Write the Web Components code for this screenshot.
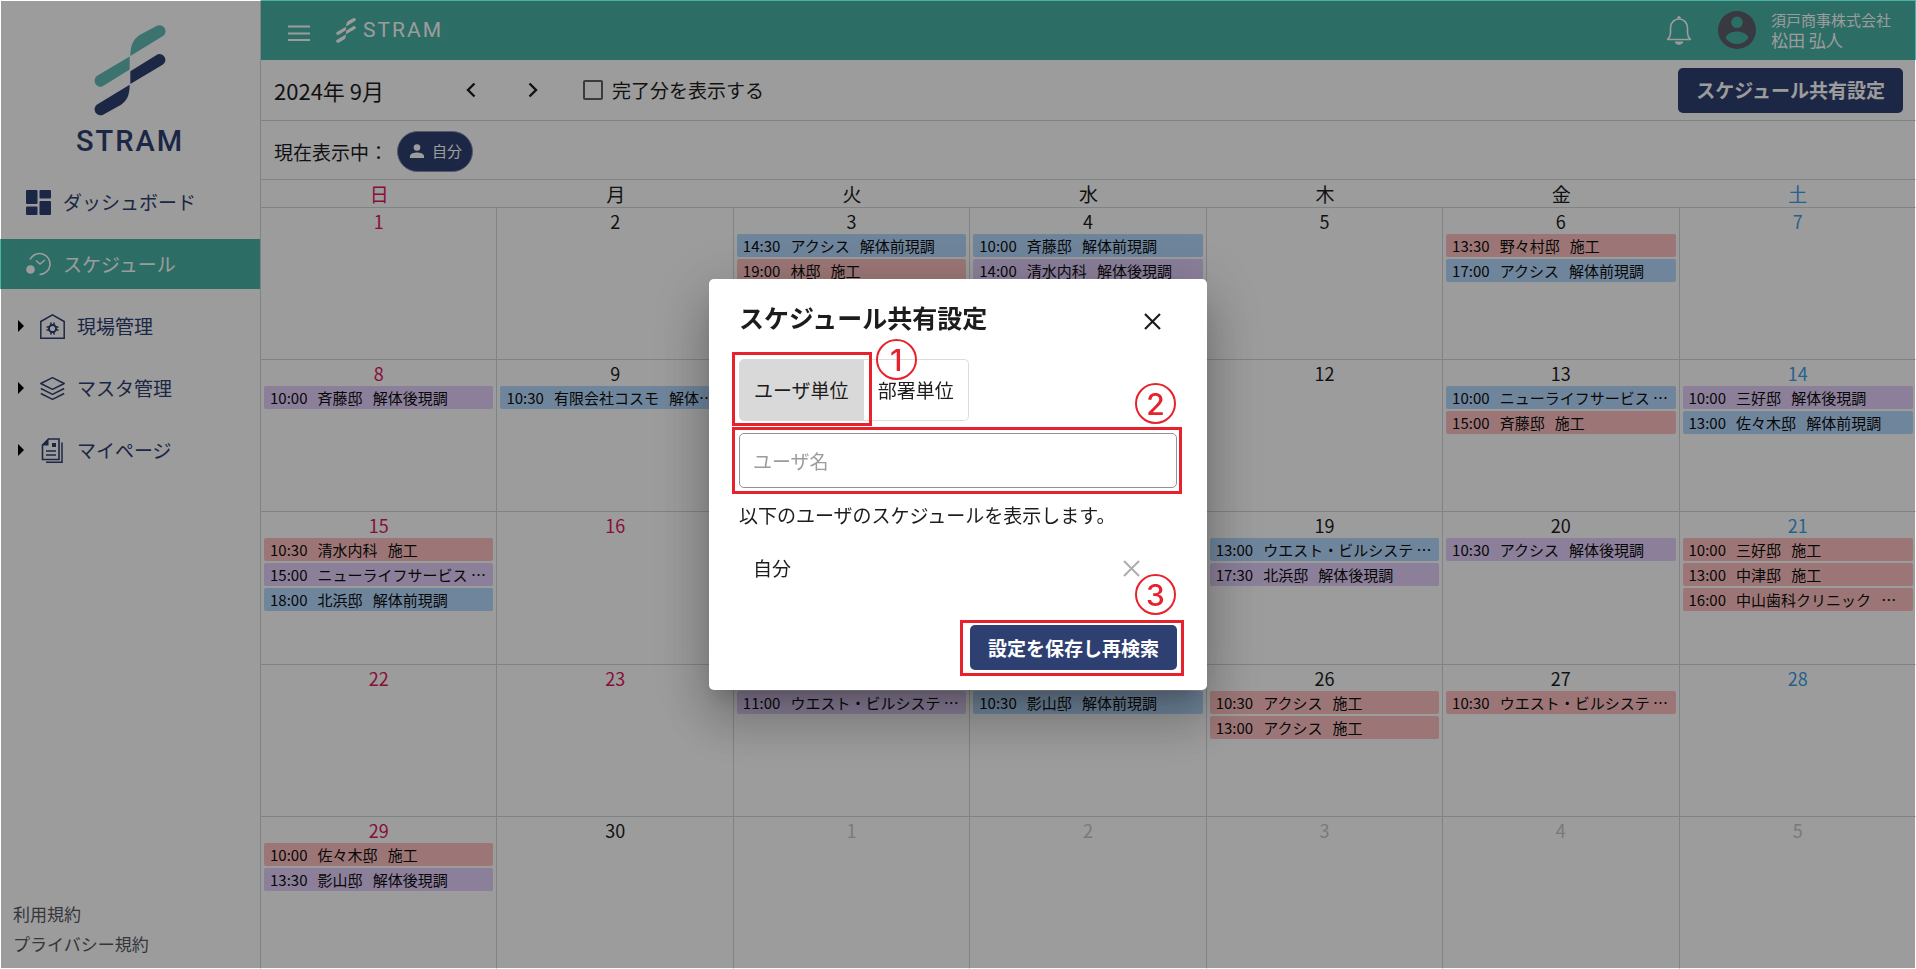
<!DOCTYPE html>
<html lang="ja">
<head>
<meta charset="utf-8">
<meta name="viewport" content="width=device-width, initial-scale=1">
<title>STRAM スケジュール</title>
<style>
  body {
    margin: 0;
    font-family: "Noto Sans CJK JP", "Noto Sans", sans-serif;
    font-size: 19px;
    color: #1c1c1c;
    background: #fff;
    --teal: #48b3a6;
    --navy: #2e4072;
    --line: #cfd6d6;
    --mark: #e8222d;
  }
</style>
</head>
<body>
<stram-app></stram-app>

<script>
const define = (name, html, setup) => {
  const template = document.createElement('template');
  template.innerHTML = html.trim();
  customElements.define(name, class extends HTMLElement {
    connectedCallback() {
      if (this.shadowRoot) return;
      const root = this.attachShadow({ mode: 'open' });
      root.append(template.content.cloneNode(true));
      if (setup) setup(root, this);
    }
  });
};

const base = '*{box-sizing:border-box}button,input{font:inherit;color:inherit}button{cursor:pointer}svg{display:block;flex:none}a{color:inherit;text-decoration:none}';

/* Brand mark: two interlaced strokes; takes its two colours from properties */
define('stram-mark', `
<style>${base}:host{display:block}svg{width:100%;height:100%}</style>
<svg viewBox="284 74 216 274" aria-hidden="true">
  <g fill="var(--mark-top)">
    <path d="M393 167C393 130 405 112 428 100L472 77A17 17 0 0 1 490 108Z"/>
    <path d="M391 169V208L311 258A18 18 0 0 1 293 227Z"/>
  </g>
  <g fill="var(--mark-bottom)">
    <path d="M393 213L472 164A17 17 0 0 1 490 194L393 252Z"/>
    <path d="M391 254C391 290 380 306 357 319L311 344A18 18 0 0 1 293 313Z"/>
  </g>
</svg>`);

const icons = {
  dashboard: '<g fill="currentColor"><rect x="0" y="0" width="11.5" height="14" rx="1"/><rect x="13.5" y="0" width="11.5" height="8.5" rx="1"/><rect x="0" y="16.5" width="11.5" height="8.5" rx="1"/><rect x="13.5" y="11" width="11.5" height="14" rx="1"/></g>',
  schedule: '<path d="M4 7.500A10.500 10.500 0 1 1 13.500 22.500M10 8.500l4 3.500 5-4" fill="none" stroke="currentColor" stroke-width="1.600"/><circle cx="4.500" cy="17.500" r="4.300" fill="currentColor"/>',
  site: '<path d="M.8 7.500L12.500 .9 24.200 7.500V24.200H.8Z" fill="none" stroke="currentColor" stroke-width="1.500"/><circle cx="12.500" cy="14.500" r="3.600" fill="none" stroke="currentColor" stroke-width="2"/><path d="M11 8.500v3M14 8.500v3M11 17.500v3M14 17.500v3M6.500 13h3M6.500 16h3M15.500 13h3M15.500 16h3" stroke="currentColor" stroke-width="1.600"/>',
  master: '<path d="M.8 7.500L12.500 1.700 24.200 7.500 12.500 13.300ZM.8 12.500L12.500 18.300 24.200 12.500M.8 17.500L12.500 23.300 24.200 17.500" fill="none" stroke="currentColor" stroke-width="1.500" stroke-linejoin="round"/>',
  page: '<path d="M8.500 1H19V21.500H2.500V7Z" fill="none" stroke="currentColor" stroke-width="1.600"/><path d="M2 7.500L8.500 .8V7.500ZM12 5h4v4h-4Z" fill="currentColor"/><path d="M6 13h10M6 17h10M22 4.500V24.200H6" fill="none" stroke="currentColor" stroke-width="1.500"/>'
};

define('nav-item', `
<style>${base}
:host{display:block;color:var(--navy)}
a{display:flex;align-items:center;height:50px;padding-left:26px;gap:12px;line-height:28px}
svg{width:25px;height:25px}
.arrow{display:none;width:6px;height:12px;color:#000}
:host([group]) a{padding-left:18px;gap:0}
:host([group]) .arrow{display:block;margin-right:16px}
:host([group]) .icon{margin-right:12px}
:host([active]){background:var(--teal);color:#fff}
</style>
<a href="#"><svg class="arrow" viewBox="0 0 6 12" aria-hidden="true"><path d="M0 0L6 6 0 12Z"/></svg><svg class="icon" viewBox="0 0 25 25" aria-hidden="true"></svg><slot></slot></a>`,
(root, host) => {
  root.querySelector('.icon').innerHTML = icons[host.getAttribute('icon')];
  if (host.hasAttribute('active')) root.querySelector('a').setAttribute('aria-current', 'page');
});

define('side-nav', `
<style>${base}
:host{display:flex;flex-direction:column;width:261px;border-right:1px solid var(--line);background:#fff}
.brand{display:flex;flex-direction:column;align-items:center;padding-top:25px;color:var(--navy)}
stram-mark{width:72px;height:91px;--mark-top:#62bdb5;--mark-bottom:var(--navy)}
.word{margin-top:9px;font:500 29px/32px Roboto,sans-serif;letter-spacing:2px}
nav{display:flex;flex-direction:column;gap:12px;margin-top:20px}
footer{display:flex;flex-direction:column;margin-top:auto;padding:0 13px 10px;font-size:17px;line-height:30px;color:#55595f}
</style>
<div class="brand"><stram-mark></stram-mark><span class="word">STRAM</span></div>
<nav>
  <nav-item icon="dashboard">ダッシュボード</nav-item>
  <nav-item icon="schedule" active>スケジュール</nav-item>
  <nav-item icon="site" group>現場管理</nav-item>
  <nav-item icon="master" group>マスタ管理</nav-item>
  <nav-item icon="page" group>マイページ</nav-item>
</nav>
<footer><a href="#">利用規約</a><a href="#">プライバシー規約</a></footer>`);

define('app-header', `
<style>${base}
:host{display:flex;align-items:center;height:60px;padding:0 25px 0 26px;background:var(--teal);color:#fff}
button{display:block;padding:0;border:0;background:none}
.menu{margin-top:6px}
stram-mark{width:20px;height:25px;margin-left:25px;--mark-top:#fff;--mark-bottom:#fff}
.word{margin-left:7px;font:400 21px/24px Roboto,sans-serif;letter-spacing:2px}
.bell{margin-left:auto}
.avatar{margin-left:26px}
.user{display:grid;margin-left:15px;font-size:17px;line-height:20px}
.user small{font-size:15px}
</style>
<button class="menu" aria-label="メニュー"><svg width="24" height="16" viewBox="0 0 24 16"><path d="M1 1.500H23M1 8.500H23M1 15H23" stroke="currentColor" stroke-width="1.800"/></svg></button>
<stram-mark></stram-mark><span class="word">STRAM</span>
<button class="bell" aria-label="通知"><svg width="26" height="30" viewBox="0 0 26 30"><path d="M1.500 24.500H24.500C22.500 22.500 21.500 21 21.500 18V13C21.500 8 18 4 13 4S4.500 8 4.500 13V18C4.500 21 3.500 22.500 1.500 24.500Z" fill="none" stroke="currentColor" stroke-width="1.600" stroke-linejoin="round"/><path d="M11.500 3.500a1.500 2 0 0 1 3 0M9 27h8c-1 3-7 3-8 0Z" fill="currentColor" stroke="currentColor"/></svg></button>
<svg class="avatar" width="38" height="38" viewBox="0 0 38 38" aria-hidden="true"><path fill="#5d5d6b" fill-rule="evenodd" d="M19 0a19 19 0 1 0 0 38 19 19 0 0 0 0-38ZM19 5.500a5.800 5.800 0 1 1 0 11.600 5.800 5.800 0 0 1 0-11.600ZM19 33c-5 0-9.200-2.500-11.500-6.500 1.500-4 7.500-6 11.500-6s10 2 11.500 6C28.200 30.500 24 33 19 33Z"/></svg>
<div class="user"><small>須戸商事株式会社</small><span>松田 弘人</span></div>`);

define('primary-button', `
<style>${base}
:host{display:block}
button{display:block;height:45px;padding:0 18px;border:0;border-radius:5px;background:var(--navy);color:#fff;font-weight:700;line-height:28px}
</style>
<button type="button"><slot></slot></button>`);

define('calendar-toolbar', `
<style>${base}
:host{display:block}
.row{display:flex;align-items:center;padding:0 13px;border-bottom:1px solid var(--line)}
.month{height:61px}
.filter{height:59px;padding-top:2px}
h1{width:183px;margin:0;font-size:22px;font-weight:400;line-height:32px}
button{display:flex;align-items:center;justify-content:center;width:28px;height:28px;padding:0;border:0;background:none}
.next{margin-left:34px}
label{display:flex;align-items:center;gap:9px;margin-left:36px;line-height:28px}
input{appearance:none;width:20px;height:20px;margin:0;border:2px solid #5f5f5f;border-radius:2px}
primary-button{margin-left:auto}
.chip{display:flex;align-items:center;gap:8px;height:41px;margin-left:9px;padding:0 10px 0 12px;border:1px solid #8793b5;border-radius:21px;background:var(--navy);color:#fff;font-size:15px;line-height:22px}
</style>
<div class="row month">
  <h1>2024年 9月</h1>
  <button aria-label="前の月"><svg width="10" height="16" viewBox="0 0 10 16"><path d="M8.500 1.500L2 8l6.500 6.500" fill="none" stroke="currentColor" stroke-width="2.400"/></svg></button>
  <button class="next" aria-label="次の月"><svg width="10" height="16" viewBox="0 0 10 16"><path d="M1.500 1.500L8 8l-6.500 6.500" fill="none" stroke="currentColor" stroke-width="2.400"/></svg></button>
  <label><input type="checkbox">完了分を表示する</label>
  <primary-button>スケジュール共有設定</primary-button>
</div>
<div class="row filter">
  <span>現在表示中：</span>
  <span class="chip"><svg width="14" height="14" viewBox="0 0 14 14" aria-hidden="true"><circle cx="7" cy="3.500" r="3.300" fill="currentColor"/><path d="M0 14v-2C0 9.500 4.500 8.500 7 8.500s7 1 7 3.500v2Z" fill="currentColor"/></svg>自分</span>
</div>`);

/* kind: work = 施工, before = 解体前現調, after = 解体後現調 */
define('calendar-event', `
<style>${base}
:host{display:block;height:23px;padding:0 6px;border-radius:2px;white-space:nowrap;font-size:15px;line-height:23px;color:#0c0c0c;background:#b6daff}
:host([kind=work]){background:#ffc2c2}
:host([kind=after]){background:#e3d0fb}
</style><slot></slot>`);

const B = 'before', A = 'after', W = 'work';
const S = '\u00a0\u00a0\u00a0';
const events = {
  3: [[B, '14:30', 'アクシス', '解体前現調'], [W, '19:00', '林邸', '施工']],
  4: [[B, '10:00', '斉藤邸', '解体前現調'], [A, '14:00', '清水内科', '解体後現調']],
  6: [[W, '13:30', '野々村邸', '施工'], [B, '17:00', 'アクシス', '解体前現調']],
  8: [[A, '10:00', '斉藤邸', '解体後現調']],
  9: [[B, '10:30', '有限会社コスモ', '解体…']],
  13: [[B, '10:00', 'ニューライフサービス …'], [W, '15:00', '斉藤邸', '施工']],
  14: [[A, '10:00', '三好邸', '解体後現調'], [B, '13:00', '佐々木邸', '解体前現調']],
  15: [[W, '10:30', '清水内科', '施工'], [A, '15:00', 'ニューライフサービス …'], [B, '18:00', '北浜邸', '解体前現調']],
  19: [[B, '13:00', 'ウエスト・ビルシステ …'], [A, '17:30', '北浜邸', '解体後現調']],
  20: [[A, '10:30', 'アクシス', '解体後現調']],
  21: [[W, '10:00', '三好邸', '施工'], [W, '13:00', '中津邸', '施工'], [W, '16:00', '中山歯科クリニック', '…']],
  24: [[A, '11:00', 'ウエスト・ビルシステ …']],
  25: [[B, '10:30', '影山邸', '解体前現調']],
  26: [[W, '10:30', 'アクシス', '施工'], [W, '13:00', 'アクシス', '施工']],
  27: [[W, '10:30', 'ウエスト・ビルシステ …']],
  29: [[W, '10:00', '佐々木邸', '施工'], [A, '13:30', '影山邸', '解体後現調']]
};
const holidays = [16, 22, 23];

define('month-calendar', `
<style>${base}
:host{display:block;flex:1}
table{width:100%;table-layout:fixed;border-spacing:0;border-collapse:separate}
th{height:28px;padding:0;border-bottom:1px solid var(--line);font-weight:400;line-height:27px}
td{height:calc((100vh - 208px) / 5);padding:0 3px;vertical-align:top;border:solid var(--line);border-width:0 1px 1px 0}
td:last-child{border-right:0}
tr:last-child td{border-bottom:0}
time{display:block;text-align:center;font-size:18px;line-height:26px}
.events{display:grid;gap:2px}
.sun{color:#e0185a}
.sat{color:#3f9ee6}
.other{color:#c3c9c9}
</style>
<table><thead><tr></tr></thead><tbody></tbody></table>`,
root => {
  const head = root.querySelector('thead tr');
  [...'日月火水木金土'].forEach((name, i) => {
    const th = document.createElement('th');
    th.scope = 'col';
    th.textContent = name;
    th.className = i === 0 ? 'sun' : i === 6 ? 'sat' : '';
    head.append(th);
  });
  const body = root.querySelector('tbody');
  for (let week = 0; week < 5; week++) {
    const row = body.insertRow();
    for (let i = 0; i < 7; i++) {
      const n = week * 7 + i + 1;
      const cell = row.insertCell();
      const label = document.createElement('time');
      label.textContent = n > 30 ? n - 30 : n;
      label.className = n > 30 ? 'other' : i === 0 || holidays.includes(n) ? 'sun' : i === 6 ? 'sat' : '';
      cell.append(label);
      const list = document.createElement('div');
      list.className = 'events';
      for (const [kind, ...parts] of events[n] || []) {
        const item = document.createElement('calendar-event');
        item.setAttribute('kind', kind);
        item.textContent = parts.join(S);
        list.append(item);
      }
      cell.append(list);
    }
  }
});

/* Numbered guide step: frames its slotted control and pins a circled number */
define('guide-step', `
<style>${base}
:host{display:block;position:relative}
.frame{position:absolute;inset:var(--frame,-6px);border:3px solid var(--mark);pointer-events:none;z-index:1}
.number{position:absolute;top:var(--top);right:var(--right);z-index:2;display:grid;place-items:center;width:41px;height:41px;border:2px solid var(--mark);border-radius:50%;color:var(--mark);font:500 30px/36px Inter,sans-serif;pointer-events:none}
</style>
<slot></slot><span class="frame"></span><span class="number"></span>`,
(root, host) => { root.querySelector('.number').textContent = host.getAttribute('number'); });

define('share-dialog', `
<style>${base}
:host{display:grid;place-items:center;position:fixed;inset:0}
.scrim{position:absolute;inset:1px;background:rgba(0,0,0,.39)}
dialog{position:relative;width:498px;max-width:100%;margin:0;padding:20px 30px;border:0;border-radius:5px;background:#fff;color:#1c1c1c;box-shadow:0 14px 20px -9px rgba(0,0,0,.2),0 32px 50px 4px rgba(0,0,0,.16),0 12px 60px 10px rgba(0,0,0,.14)}
header{display:flex;justify-content:space-between;height:40px;margin-bottom:20px;padding-right:16px}
h2{margin:0;font-size:25px;font-weight:700;line-height:36px}
button.x{height:44px;padding:0;border:0;background:none}
.tabs{display:flex;height:62px;margin-bottom:12px}
.tab{display:block;height:62px;padding:0 14px;border:1px solid #dcdcdc;background:#fff;line-height:28px;white-space:nowrap}
.on{background:#d9d9d9;border-color:#d9d9d9;border-radius:5px 0 0 5px}
.off{border-left:0;border-radius:0 5px 5px 0}
.tab-step{--frame:-7px -8px -5px -7px;--top:-20px;--right:-53px}
.field-step{--frame:-6px -5px -6px -7px;--top:-50px;--right:1px;margin-bottom:13px}
.save-step{--frame:-5px -7px -6px -10px;--top:-51px;--right:1px}
input{display:block;width:100%;height:55px;padding:0 13px;border:1px solid #8f9396;border-radius:5px;background:#fff;outline:0;line-height:28px}
input::placeholder{color:#999da0;opacity:1}
p{margin:0 0 18px;line-height:28px}
.member{display:flex;align-items:center;justify-content:space-between;height:42px;margin-bottom:36px;padding:0 37px 0 14px;line-height:28px}
.actions{display:flex;justify-content:flex-end}
</style>
<div class="scrim"></div>
<dialog open aria-labelledby="title">
  <header><h2 id="title">スケジュール共有設定</h2>
    <button class="x" aria-label="閉じる"><svg width="17" height="17" viewBox="0 0 17 17"><path d="M1 1L16 16M16 1L1 16" stroke="#1c1c1c" stroke-width="2.200"/></svg></button></header>
  <div class="tabs">
    <guide-step class="tab-step" number="1"><button class="tab on" aria-pressed="true">ユーザ単位</button></guide-step>
    <button class="tab off" aria-pressed="false">部署単位</button>
  </div>
  <guide-step class="field-step" number="2"><input type="text" placeholder="ユーザ名" aria-label="ユーザ名"></guide-step>
  <p>以下のユーザのスケジュールを表示します。</p>
  <div class="member"><span>自分</span>
    <button class="x" aria-label="自分を外す"><svg width="17" height="17" viewBox="0 0 17 17"><path d="M1 1L16 16M16 1L1 16" stroke="#adadad" stroke-width="2"/></svg></button></div>
  <div class="actions"><guide-step class="save-step" number="3"><primary-button>設定を保存し再検索</primary-button></guide-step></div>
</dialog>`);

define('stram-app', `
<style>${base}
:host{display:flex;min-height:100vh}
side-nav{flex:none}
main{flex:1;min-width:0;display:flex;flex-direction:column}
</style>
<side-nav></side-nav>
<main>
  <app-header></app-header>
  <calendar-toolbar></calendar-toolbar>
  <month-calendar></month-calendar>
</main>
<share-dialog></share-dialog>`);
</script>
</body>
</html>
